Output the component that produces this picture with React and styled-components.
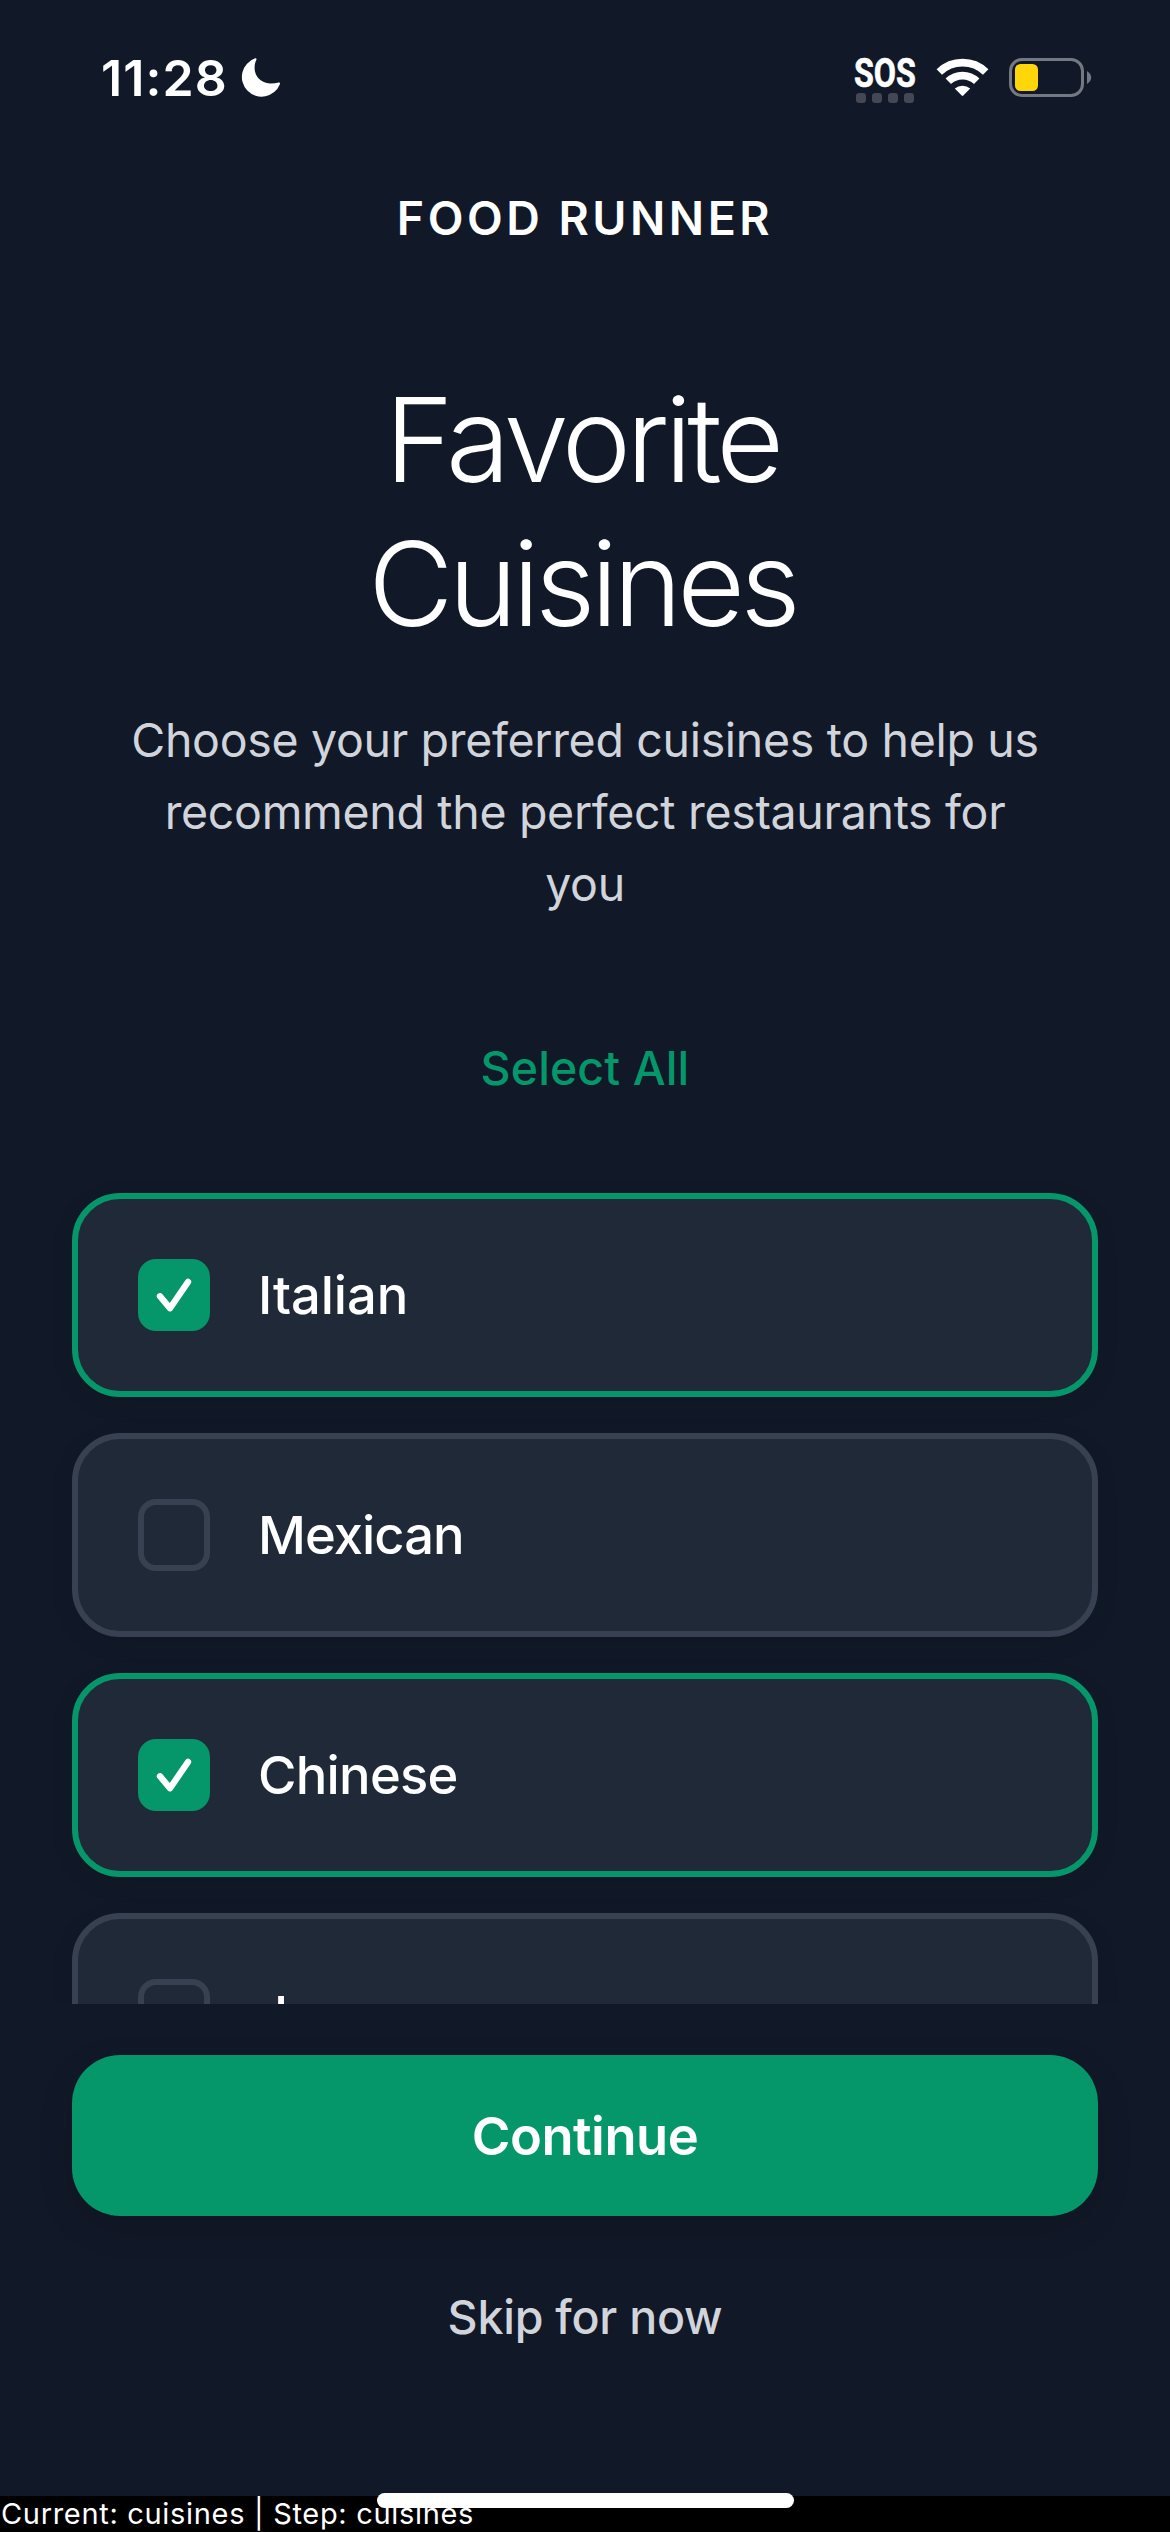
import React, { useState } from "react";
import styled, { createGlobalStyle } from "styled-components";

const cuisines = [
  { name: "Italian", tracking: -0.1 },
  { name: "Mexican", tracking: -0.95 },
  { name: "Chinese", tracking: -0.75 },
  { name: "Japanese", tracking: -0.85 },
];

const MoonIcon = () => (
  <svg width="40" height="40" viewBox="0 0 40 40">
    <path
      fill="#fff"
      d="M14.2 .3A19.7 19.7 0 1 0 38.9 26.2C39.3 25 38.6 24.1 37.6 24.5C35 25.3 32 25.6 29 25.5C20 25 13.6 18.5 13.6 10C13.6 7 14 4.5 15.3 2C15.8 .9 15.3 0 14.2 .3Z"
    />
  </svg>
);

const SosIcon = () => (
  <svg width="62" height="48" viewBox="0 0 62 48">
    <text
      x="0"
      y="30.5"
      fill="#fff"
      stroke="#fff"
      strokeWidth="0.6"
      fontFamily="Roboto, sans-serif"
      fontWeight="700"
      fontSize="41"
      textLength="62"
      lengthAdjust="spacingAndGlyphs"
    >
      SOS
    </text>
    <g fill="#434854">
      <rect x="2" y="37" width="10" height="10" rx="3.2" />
      <rect x="18" y="37" width="10" height="10" rx="3.2" />
      <rect x="34" y="37" width="10" height="10" rx="3.2" />
      <rect x="50" y="37" width="10" height="10" rx="3.2" />
    </g>
  </svg>
);

const WifiIcon = () => (
  <svg width="51" height="39" viewBox="0 0 51 39">
    <g fill="none" stroke="#fff" strokeWidth="7.8">
      <path d="M2.3 14A33.4 33.4 0 0 1 48.7 14" />
      <path d="M11.3 23.3A20.4 20.4 0 0 1 39.7 23.3" />
    </g>
    <path
      fill="#fff"
      d="M17.8 30.6A11.7 11.7 0 0 1 33.2 30.6L26.3 37.6Q25.5 38.4 24.7 37.6Z"
    />
  </svg>
);

const BatteryIcon = () => (
  <svg width="83" height="39" viewBox="0 0 83 39">
    <rect
      x="1.5"
      y="1.5"
      width="72"
      height="36"
      rx="11.5"
      fill="none"
      stroke="#747882"
      strokeWidth="3"
    />
    <rect x="6" y="6" width="23" height="27" rx="5.5" fill="#ffd60a" />
    <path d="M78 13Q82.2 15.6 82.2 19.5Q82.2 23.4 78 26Z" fill="#747882" />
  </svg>
);

const CheckIcon = () => (
  <svg width="72" height="72" viewBox="0 0 72 72">
    <path
      d="M22 37.3L32 49.2L50 23"
      fill="none"
      stroke="#fff"
      strokeWidth="6.4"
      strokeLinecap="round"
      strokeLinejoin="round"
    />
  </svg>
);

export default function App() {
  const [selected, setSelected] = useState(["Italian", "Chinese"]);

  const toggle = (name) =>
    setSelected((prev) =>
      prev.includes(name) ? prev.filter((c) => c !== name) : [...prev, name]
    );

  return (
    <>
      <GlobalStyle />
      <Screen>
        <StatusBar>
          <Clock>11:28</Clock>
          <MoonIcon />
          <StatusIcons>
            <SosIcon />
            <WifiIcon />
            <BatteryIcon />
          </StatusIcons>
        </StatusBar>
        <Brand>FOOD RUNNER</Brand>
        <Title>Favorite Cuisines</Title>
        <Subtitle>
          Choose your preferred cuisines to help us recommend the perfect
          restaurants for you
        </Subtitle>
        <SelectAll onClick={() => setSelected(cuisines.map((c) => c.name))}>
          Select All
        </SelectAll>
        <CuisineList>
          {cuisines.map(({ name, tracking }) => {
            const checked = selected.includes(name);
            return (
              <CuisineCard
                key={name}
                $checked={checked}
                onClick={() => toggle(name)}
              >
                <Checkbox $checked={checked}>
                  {checked && <CheckIcon />}
                </Checkbox>
                <CuisineName $tracking={tracking}>{name}</CuisineName>
              </CuisineCard>
            );
          })}
        </CuisineList>
        <Footer>
          <ContinueButton>Continue</ContinueButton>
          <SkipButton>Skip for now</SkipButton>
        </Footer>
        <DebugBar>Current: cuisines | Step: cuisines</DebugBar>
        <HomeIndicator />
      </Screen>
    </>
  );
}

const GlobalStyle = createGlobalStyle`
  * {
    box-sizing: border-box;
  }
  body {
    margin: 0;
    background: #111827;
    font-family: Inter, "Liberation Sans", sans-serif;
  }
  button {
    font-family: inherit;
    border: none;
    padding: 0;
    background: none;
  }
  svg {
    display: block;
    flex-shrink: 0;
    overflow: visible;
  }
`;

const Screen = styled.div`
  position: relative;
  display: flex;
  flex-direction: column;
  width: 1170px;
  height: 2532px;
  overflow: hidden;
  background: #111827;
  color: #fff;
`;

const StatusBar = styled.div`
  display: flex;
  align-items: center;
  height: 156px;
  flex-shrink: 0;
  padding: 0 78px 0 101px;
`;

const Clock = styled.span`
  width: 140px;
  font-size: 50px;
  font-weight: 600;
  line-height: 60px;
  letter-spacing: 1.1px;
`;

const StatusIcons = styled.div`
  display: flex;
  align-items: flex-start;
  margin-top: 4px;
  margin-left: auto;

  & > svg:nth-child(n + 2) {
    margin-top: 2px;
    margin-left: 21px;
  }
`;

const Brand = styled.div`
  margin-top: 32px;
  text-align: center;
  font-size: 46.5px;
  font-weight: 600;
  line-height: 60px;
  letter-spacing: 3.5px;
`;

const Title = styled.h1`
  width: 600px;
  margin: 120px auto 0;
  padding-right: 6px;
  text-align: center;
  font-size: 117px;
  font-weight: 300;
  line-height: 144px;
  letter-spacing: -4.8px;
`;

const Subtitle = styled.p`
  margin: 48px 126px 0;
  text-align: center;
  color: #d1d5db;
  font-size: 46.5px;
  line-height: 72px;
  letter-spacing: -0.32px;
`;

const SelectAll = styled.button`
  align-self: center;
  margin-top: 118px;
  color: #059669;
  font-size: 46.5px;
  font-weight: 500;
  line-height: 60px;
  letter-spacing: 0.1px;
`;

const CuisineList = styled.div`
  display: flex;
  flex-direction: column;
  gap: 36px;
  height: 906px;
  flex-shrink: 0;
  padding: 95px 72px 0;
  overflow: hidden;
`;

const CuisineCard = styled.div`
  display: flex;
  align-items: center;
  gap: 48px;
  height: 204px;
  flex-shrink: 0;
  padding: 0 60px;
  border: 6px solid ${(p) => (p.$checked ? "#059669" : "#374151")};
  border-radius: 48px;
  background: #1f2937;
  box-shadow: 0 6px 24px rgba(0, 0, 0, 0.08);
`;

const Checkbox = styled.div`
  display: flex;
  align-items: center;
  justify-content: center;
  width: 72px;
  height: 72px;
  border: ${(p) => (p.$checked ? "none" : "6px solid #374151")};
  border-radius: 18px;
  background: ${(p) => (p.$checked ? "#059669" : "transparent")};
`;

const CuisineName = styled.span`
  font-size: 52.5px;
  font-weight: 500;
  line-height: 60px;
  letter-spacing: ${(p) => p.$tracking}px;
`;

const Footer = styled.div`
  display: flex;
  flex-direction: column;
  align-items: center;
  flex: 1;
  padding: 51px 72px 0;
`;

const ContinueButton = styled.button`
  width: 100%;
  height: 161px;
  border-radius: 48px;
  background: #059669;
  color: #fff;
  font-size: 52.5px;
  font-weight: 600;
  line-height: 60px;
  letter-spacing: -0.47px;
  box-shadow: 0 12px 36px rgba(0, 0, 0, 0.12);
`;

const SkipButton = styled.button`
  margin-top: 71px;
  color: #d1d5db;
  font-size: 46.5px;
  font-weight: 500;
  line-height: 60px;
  letter-spacing: -0.23px;
`;

const DebugBar = styled.div`
  height: 36px;
  flex-shrink: 0;
  padding-left: 1px;
  background: #000;
  font-size: 29px;
  line-height: 36px;
  letter-spacing: 0.68px;
`;

const HomeIndicator = styled.div`
  position: absolute;
  left: 377px;
  bottom: 24px;
  width: 417px;
  height: 15px;
  border-radius: 8px;
  background: #fff;
`;
